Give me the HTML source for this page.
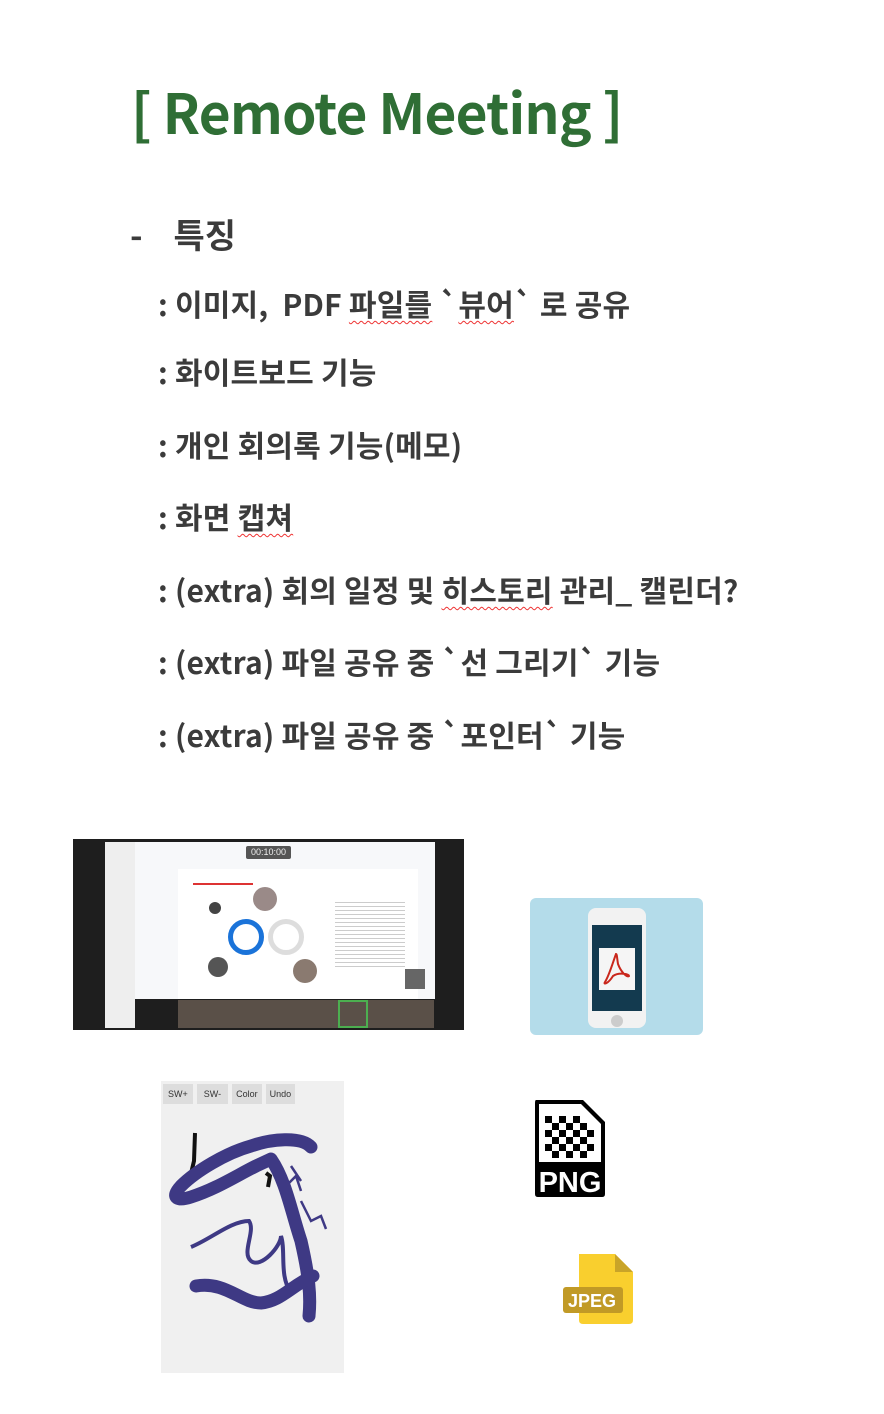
<!DOCTYPE html>
<html><head><meta charset="utf-8"><style>
body{margin:0;width:884px;height:1414px;background:#fff;position:relative;overflow:hidden;font-family:"Liberation Sans","Noto Sans CJK KR",sans-serif;}
.t{position:absolute;white-space:nowrap;font-family:"Noto Sans CJK KR","Liberation Sans",sans-serif;font-weight:700;color:#3b3b3b;line-height:1;}
.title{left:131px;top:83px;font-size:55px;color:#2f6e35;letter-spacing:-0.8px;}
.it{left:158px;font-size:30px;letter-spacing:0.2px;}
.sq{text-decoration:underline wavy #e33;text-decoration-thickness:1px;text-underline-offset:4px;}
</style></head><body>
<div class="t title">[ Remote Meeting ]</div>
<div class="t" style="left:130px;top:217px;font-size:34px;">-&nbsp;&nbsp;&nbsp;&nbsp;특징</div>
<div class="t it" style="top:288px">: 이미지,&nbsp; PDF <span class="sq">파일를</span> `<span class="sq">뷰어</span>` 로 공유</div>
<div class="t it" style="top:356px">: 화이트보드 기능</div>
<div class="t it" style="top:429px">: 개인 회의록 기능(메모)</div>
<div class="t it" style="top:501px">: 화면 <span class="sq">캡쳐</span></div>
<div class="t it" style="top:574px">: (extra) 회의 일정 및 <span class="sq">히스토리</span> 관리_ 캘린더?</div>
<div class="t it" style="top:646px">: (extra) 파일 공유 중 `선 그리기` 기능</div>
<div class="t it" style="top:719px">: (extra) 파일 공유 중 `포인터` 기능</div>

<!-- tablet screenshot -->
<div style="position:absolute;left:73px;top:839px;width:391px;height:191px;background:#1e1e1e;">
  <div style="position:absolute;left:32px;top:3px;width:30px;height:186px;background:#eee;"></div>
  <div style="position:absolute;left:62px;top:3px;width:300px;height:157px;background:#f7f8fa;"></div>
  <div style="position:absolute;left:105px;top:30px;width:240px;height:130px;background:#fff;"></div>
  <div style="position:absolute;left:173px;top:7px;width:45px;height:13px;background:#555;color:#eee;font-size:9px;text-align:center;line-height:13px;border-radius:2px;">00:10:00</div>
  <div style="position:absolute;left:155px;top:80px;width:36px;height:36px;border-radius:50%;border:5px solid #1a73d9;box-sizing:border-box;"></div>
  <div style="position:absolute;left:195px;top:80px;width:36px;height:36px;border-radius:50%;border:5px solid #ddd;box-sizing:border-box;"></div>
  <div style="position:absolute;left:136px;top:63px;width:12px;height:12px;border-radius:50%;background:#444;"></div>
  <div style="position:absolute;left:135px;top:118px;width:20px;height:20px;border-radius:50%;background:#555;"></div>
  <div style="position:absolute;left:220px;top:120px;width:24px;height:24px;border-radius:50%;background:#8a7a70;"></div>
  <div style="position:absolute;left:180px;top:48px;width:24px;height:24px;border-radius:50%;background:#9a8a88;"></div>
  <div style="position:absolute;left:120px;top:44px;width:60px;height:2px;background:#d33;"></div>
  <div style="position:absolute;left:262px;top:60px;width:70px;height:70px;background:repeating-linear-gradient(#fff 0 3px,#ccc 3px 4px);"></div>
  <div style="position:absolute;left:332px;top:130px;width:20px;height:20px;background:#666;"></div>
  <div style="position:absolute;left:105px;top:161px;width:256px;height:28px;background:#5a5048;"></div>
  <div style="position:absolute;left:265px;top:161px;width:30px;height:28px;border:2px solid #4caf50;box-sizing:border-box;"></div>
</div>

<!-- pdf phone -->
<div style="position:absolute;left:530px;top:898px;width:173px;height:137px;background:#b4dcea;border-radius:6px;">
  <div style="position:absolute;left:58px;top:10px;width:58px;height:120px;background:#f2f2f2;border-radius:8px;">
    <div style="position:absolute;left:4px;top:17px;width:50px;height:86px;background:#133a4f;"></div>
    <div style="position:absolute;left:11px;top:40px;width:36px;height:42px;background:#f5f5f5;">
      <svg width="36" height="42"><path d="M17 6 C14 14 10 28 6 34 C4 37 9 36 14 28 C20 24 30 26 30 28 C28 30 22 24 19 16 C18 10 18 6 17 6Z" stroke="#c9271c" stroke-width="2" fill="none"/></svg>
    </div>
    <div style="position:absolute;left:23px;top:107px;width:12px;height:12px;background:#ccc;border-radius:50%;"></div>
  </div>
</div>

<!-- drawing board -->
<div style="position:absolute;left:161px;top:1081px;width:183px;height:292px;background:#f0f0f0;">
  <div style="position:absolute;left:2px;top:3px;display:flex;gap:4px;font-size:9px;color:#333;">
    <span style="background:#ddd;padding:5px 5px;">SW+</span><span style="background:#ddd;padding:5px 7px;">SW-</span><span style="background:#ddd;padding:5px 4px;">Color</span><span style="background:#ddd;padding:5px 4px;">Undo</span>
  </div>
  <svg width="183" height="292" style="position:absolute;left:0;top:0">
    <path d="M34 52 L33 80 L27 105" stroke="#111" stroke-width="4" fill="none"/>
    <path d="M105 92 L109 95 L107 106" stroke="#111" stroke-width="4" fill="none"/>
    <path d="M150 66 C140 55 110 58 90 65 C65 72 35 90 20 105 C8 118 18 120 30 116 C55 108 75 95 95 85 L110 78 C125 100 130 130 140 160 C148 195 150 215 148 235" stroke="#3e3984" stroke-width="13" fill="none" stroke-linecap="round" stroke-linejoin="round"/>
    <path d="M30 166 C50 158 70 140 88 140 C95 150 80 172 90 180 C100 188 120 165 120 155 C125 170 118 195 130 212" stroke="#3e3984" stroke-width="4" fill="none"/>
    <path d="M35 205 C65 200 80 222 100 222 C120 220 130 205 152 195" stroke="#3e3984" stroke-width="13" fill="none" stroke-linecap="round"/>
    <path d="M140 120 L150 140 L160 135 L165 148 M130 85 L140 100 M125 105 L135 95 L140 110" stroke="#3e3984" stroke-width="2.5" fill="none"/>
  </svg>
</div>

<!-- PNG icon -->
<div style="position:absolute;left:533px;top:1098px;width:74px;height:100px;">
  <svg width="74" height="100" viewBox="0 0 74 100">
    <path d="M3 2 H50 L72 24 V96 Q72 99 69 99 H5 Q2 99 2 96 V5 Q2 2 3 2Z" fill="#000"/>
    <path d="M6 6 H48 L68 26 V64 H6Z" fill="#fff"/>
    <g fill="#000">
      <rect x="12" y="18" width="7" height="7"/><rect x="26" y="18" width="7" height="7"/><rect x="40" y="18" width="7" height="7"/>
      <rect x="19" y="25" width="7" height="7"/><rect x="33" y="25" width="7" height="7"/><rect x="47" y="25" width="7" height="7"/>
      <rect x="12" y="32" width="7" height="7"/><rect x="26" y="32" width="7" height="7"/><rect x="40" y="32" width="7" height="7"/><rect x="54" y="32" width="7" height="7"/>
      <rect x="19" y="39" width="7" height="7"/><rect x="33" y="39" width="7" height="7"/><rect x="47" y="39" width="7" height="7"/>
      <rect x="12" y="46" width="7" height="7"/><rect x="26" y="46" width="7" height="7"/><rect x="40" y="46" width="7" height="7"/><rect x="54" y="46" width="7" height="7"/>
      <rect x="19" y="53" width="7" height="7"/><rect x="33" y="53" width="7" height="7"/><rect x="47" y="53" width="7" height="7"/>
    </g>
    <text x="37" y="94" text-anchor="middle" font-family="Liberation Sans" font-weight="700" font-size="29" fill="#fff">PNG</text>
  </svg>
</div>

<!-- JPEG icon -->
<div style="position:absolute;left:563px;top:1253px;width:71px;height:72px;">
  <svg width="71" height="72" viewBox="0 0 71 72">
    <path d="M16 1 H52 L70 19 V67 Q70 71 66 71 H20 Q16 71 16 67Z" fill="#f9cf2e"/>
    <path d="M52 1 V19 H70Z" fill="#c9a428"/>
    <rect x="0" y="34" width="60" height="26" rx="3" fill="#c19a26"/>
    <text x="29" y="54" text-anchor="middle" font-family="Liberation Sans" font-weight="700" font-size="18" fill="#fff">JPEG</text>
  </svg>
</div>
</body></html>
